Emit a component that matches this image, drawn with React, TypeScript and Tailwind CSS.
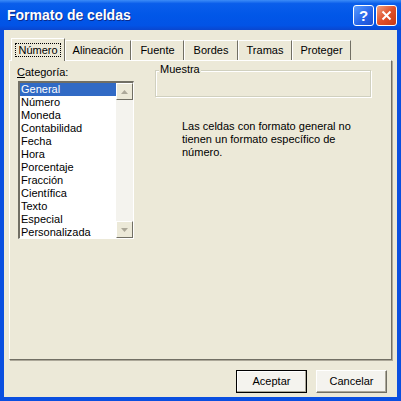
import React from "react";

const items = [
  "General",
  "Número",
  "Moneda",
  "Contabilidad",
  "Fecha",
  "Hora",
  "Porcentaje",
  "Fracción",
  "Científica",
  "Texto",
  "Especial",
  "Personalizada",
];

const tabs = [
  { label: "Alineación", w: "w-[66px]" },
  { label: "Fuente", w: "w-[53px]" },
  { label: "Bordes", w: "w-[54px]" },
  { label: "Tramas", w: "w-[54px]" },
  { label: "Proteger", w: "w-[59px]" },
];

function ArrowBtn({ up }: { up: boolean }) {
  return (
    <div className="w-[17px] h-[17px] bg-[#ECE9D8] border border-t-white border-l-white border-r-[#716F64] border-b-[#716F64] flex items-center justify-center">
      <svg width="7" height="4" viewBox="0 0 7 4">
        {up ? (
          <polygon points="0,4 3.5,0 7,4" fill="#ACA899" />
        ) : (
          <polygon points="0,0 3.5,4 7,0" fill="#ACA899" />
        )}
      </svg>
    </div>
  );
}

export default function App() {
  return (
    <div
      className="w-[401px] h-[401px] bg-[#0A4FE0] flex flex-col overflow-hidden"
      style={{ fontFamily: '"Liberation Sans", Arial, sans-serif' }}
    >
      {/* title bar */}
      <div className="h-[30px] shrink-0 bg-[linear-gradient(to_bottom,#3C8CF7_0%,#0A5EEB_12%,#0157E8_50%,#0253E6_85%,#0A46CF_100%)] flex items-center pl-[7px] pr-[4px]">
        <span className="text-white font-bold text-[14px] [text-shadow:1px_1px_#0B2A8A]">
          Formato de celdas
        </span>
        <div className="ml-auto flex gap-[2px]">
          <div className="w-[21px] h-[21px] rounded-[3px] border border-white bg-[linear-gradient(135deg,#5A9CFF,#2563E8_60%,#1D4FD0)] flex items-center justify-center text-white font-bold text-[15px] leading-none">
            ?
          </div>
          <div className="w-[21px] h-[21px] rounded-[3px] border border-white bg-[linear-gradient(135deg,#F0A080,#E0502A_50%,#C83A14)] flex items-center justify-center">
            <svg width="11" height="11" viewBox="0 0 11 11">
              <path d="M1.5 1.5 L9.5 9.5 M9.5 1.5 L1.5 9.5" stroke="white" strokeWidth="2" />
            </svg>
          </div>
        </div>
      </div>

      {/* client */}
      <div className="flex-1 mx-[4px] mb-[4px] bg-[#ECE9D8] flex flex-col pt-[8px] px-[5px] text-[11px] text-black">
        {/* tabs */}
        <div className="flex items-end h-[22px] pl-[2px]">
          <div className="relative z-10 w-[54px] h-[23px] -mb-[1px] bg-[#ECE9D8] border-t border-l border-white border-r border-r-[#716F64] flex items-center justify-center">
            <span className="border border-dotted border-black px-[2px] leading-[12px]">Número</span>
          </div>
          {tabs.map((t) => (
            <div
              key={t.label}
              className={`${t.w} h-[20px] border-t border-l border-white border-r border-r-[#716F64] flex items-center justify-center`}
            >
              {t.label}
            </div>
          ))}
        </div>

        {/* panel */}
        <div className="h-[300px] border border-t-white border-l-white border-r-[#716F64] border-b-[#716F64] shadow-[1px_1px_0_#ACA899] relative pl-[7px] pt-[5px]">
          <div className="flex">
            {/* left column */}
            <div className="w-[116px]">
              <div className="leading-[13px]">
                <span className="underline">C</span>ategoría:
              </div>
              <div className="mt-[2px] ml-[1px] w-[116px] h-[158px] border-t-2 border-l-2 border-t-[#716F64] border-l-[#716F64] border-r border-b border-r-white border-b-white bg-white flex">
                <div className="flex-1">
                  {items.map((it, i) => (
                    <div
                      key={it}
                      className={`h-[13px] leading-[13px] pl-[1px] ${
                        i === 0 ? "bg-[#316AC5] text-white" : ""
                      }`}
                    >
                      {it}
                    </div>
                  ))}
                </div>
                <div className="w-[17px] bg-[#F4F3EE] flex flex-col justify-between">
                  <ArrowBtn up />
                  <ArrowBtn up={false} />
                </div>
              </div>
            </div>

            {/* right column */}
            <div className="ml-[22px] flex-1 pt-[4px]">
              <div className="relative w-[216px] h-[27px] border border-[#D0D0BF] shadow-[inset_1px_1px_0_white,1px_1px_0_white]">
                <span className="absolute -top-[8px] left-[3px] bg-[#ECE9D8] px-[1px] leading-[13px]">
                  Muestra
                </span>
              </div>
              <div className="mt-[23px] ml-[27px] leading-[13px]">
                Las celdas con formato general no
                <br />
                tienen un formato específico de
                <br />
                número.
              </div>
            </div>
          </div>
        </div>

        {/* buttons */}
        <div className="flex justify-end gap-[9px] mt-[10px] pr-[5px]">
          <div className="w-[71px] h-[23px] border border-black flex items-center justify-center bg-[#F4F3EE] shadow-[inset_-1px_-1px_0_#ACA899,inset_1px_1px_0_white]">
            Aceptar
          </div>
          <div className="w-[71px] h-[23px] border border-t-white border-l-white border-r-[#716F64] border-b-[#716F64] flex items-center justify-center bg-[#F4F3EE] shadow-[inset_-1px_-1px_0_#ACA899]">
            Cancelar
          </div>
        </div>
      </div>
    </div>
  );
}
